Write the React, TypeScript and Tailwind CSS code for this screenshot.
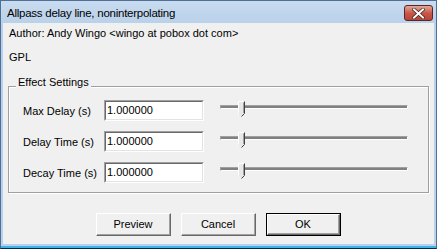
import React from "react";

function Field({ label }: { label: string }) {
  return (
    <div className="flex items-center h-[21px]">
      <div className="w-[81px] text-[11px] leading-[13px] text-black pt-[1px]">{label}</div>
      <div className="w-[100px] h-[21px] border-t-[1px] border-l-[1px] border-t-[#a0a0a0] border-l-[#a0a0a0] border-b-[1px] border-r-[1px] border-b-white border-r-white">
        <div className="w-full h-full bg-white border-t-[1px] border-l-[1px] border-t-[#696969] border-l-[#696969] border-b-[1px] border-r-[1px] border-b-[#e3e3e3] border-r-[#e3e3e3] pl-[1px] text-[11px] leading-[17px] text-black">
          1.000000
        </div>
      </div>
      <div className="relative ml-[16px] w-[188px] h-[21px]">
        <div className="absolute left-0 right-0 top-[5px] h-[4px] border-t border-l border-b border-r bg-[#808080]" style={{ borderTopColor: "#a0a0a0", borderLeftColor: "#a0a0a0", borderBottomColor: "#ffffff", borderRightColor: "#ffffff" }} />
        <svg className="absolute left-[18px] top-[1px]" width="8" height="16" viewBox="0 0 8 16">
          <path d="M0.5 0.5 H6.5 V12.5 L3.5 15.5 L0.5 12.5 Z" fill="#e8e8e8" stroke="none" />
          <path d="M0.5 12.5 V0.5 H6.5" fill="none" stroke="#ffffff" />
          <path d="M6.5 0.5 V12.5 L3.5 15.5" fill="none" stroke="#404040" />
          <path d="M5.5 1.5 V12" fill="none" stroke="#a0a0a0" />
        </svg>
      </div>
    </div>
  );
}

function Btn({ children, def }: { children: React.ReactNode; def?: boolean }) {
  return (
    <div className={"w-[75px] h-[23px] " + (def ? "border border-black" : "")}>
      <div className="w-full h-full border-t border-l border-white border-b border-r border-b-[#696969] border-r-[#696969]">
        <div className="w-full h-full border-b border-r border-[#a0a0a0] border-t-0 border-l-0 bg-[#f0f0f0] flex items-center justify-center text-[11px] leading-[13px] text-black">
          {children}
        </div>
      </div>
    </div>
  );
}

export default function App() {
  return (
    <div
      className="w-[437px] h-[249px] flex flex-col bg-[#b9d1ea] border-l border-r border-t border-[#4e6f96] border-b-[#0b2a4a] border-b"
      style={{ fontFamily: "'Liberation Sans', Arial, sans-serif" }}
    >
      <div className="h-[22px] flex items-start justify-between bg-gradient-to-b from-[#c9dbef] to-[#b9d1ea] pl-[6px] pr-[3px]">
        <div className="text-[11.5px] tracking-[-0.25px] leading-[16px] pt-[4px] text-black" style={{ fontFamily: "'Liberation Sans', Arial, sans-serif" }}>
          Allpass delay line, noninterpolating
        </div>
        <div className="mt-[4px] w-[29px] h-[16px] rounded-[3px] border border-[#5b2626] bg-gradient-to-b from-[#e0a89a] via-[#c95848] to-[#b9443a] flex items-center justify-center">
          <svg width="13" height="11" viewBox="0 0 13 11">
            <path d="M2 1.5 L11 9.5 M11 1.5 L2 9.5" stroke="#3a1a1a" strokeWidth="3.4" strokeLinecap="square" />
            <path d="M2 1.5 L11 9.5 M11 1.5 L2 9.5" stroke="#ffffff" strokeWidth="2" strokeLinecap="square" />
          </svg>
        </div>
      </div>
      <div className="flex-1 mx-[2px] mb-[2px] bg-[#f0f0f0] flex flex-col text-black">
        <div className="pl-[6px] pt-[4px] text-[11px] leading-[13px]">Author: Andy Wingo &lt;wingo at pobox dot com&gt;</div>
        <div className="pl-[6px] mt-[11px] text-[11px] leading-[13px]">GPL</div>
        <div className="relative ml-[5px] mr-[5px] mt-[22px] h-[107px] border border-[#a0a0a0] shadow-[inset_1px_1px_0_#ffffff,1px_1px_0_#ffffff] pl-[14px] pt-[13px] flex flex-col gap-[10px]">
          <div className="absolute left-[7px] top-[-11px] px-[2px] bg-[#f0f0f0] text-[11px] leading-[13px]">Effect Settings</div>
          <Field label="Max Delay (s)" />
          <Field label="Delay Time (s)" />
          <Field label="Decay Time (s)" />
        </div>
        <div className="mt-[20px] flex justify-center gap-[10px]">
          <Btn>Preview</Btn>
          <Btn>Cancel</Btn>
          <Btn def>OK</Btn>
        </div>
      </div>
      <div className="h-[2px] bg-[#3cb4e6]" />
    </div>
  );
}
